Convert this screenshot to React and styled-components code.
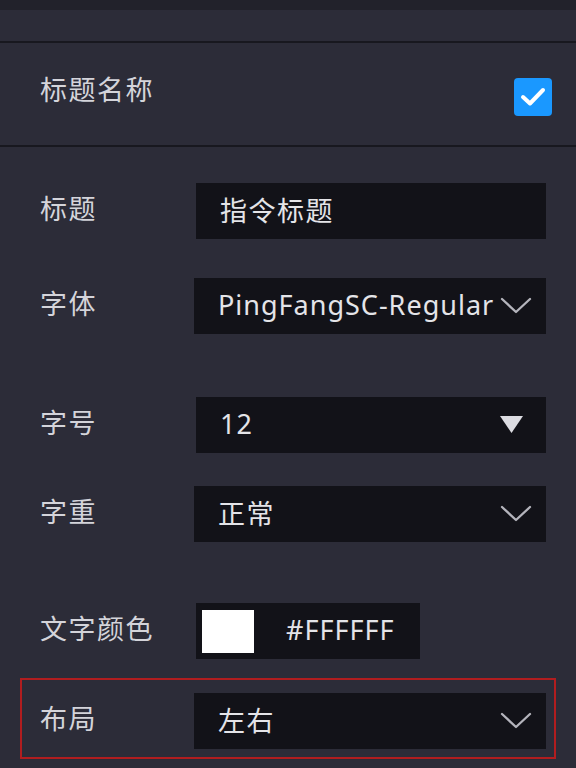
import React from "react";
import styled, { createGlobalStyle } from "styled-components";

const GlobalStyle = createGlobalStyle`
  html, body {
    margin: 0;
    padding: 0;
    background: #2c2c38;
  }
  * {
    box-sizing: border-box;
  }
`;

const Panel = styled.div`
  width: 576px;
  height: 768px;
  overflow: hidden;
  background: #2c2c38;
  font-family: "Noto Sans", "Noto Sans CJK SC", sans-serif;
  color: #d4d4da;
`;

const TopBar = styled.div`
  height: 10px;
  background: #22222b;
`;

const Spacer = styled.div`
  height: 31px;
`;

const Divider = styled.div`
  height: 2px;
  background: #18181f;
`;

const Header = styled.div`
  display: flex;
  align-items: center;
  justify-content: space-between;
  height: 102px;
  padding: 0 24px 0 40px;
`;

const HeaderTitle = styled.div`
  font-size: 27px;
  letter-spacing: 1.5px;
  margin-bottom: 11px;
`;

const CheckBox = styled.div`
  width: 38px;
  height: 38px;
  border-radius: 4px;
  background: #1a98ff;
  margin-top: 6px;
  display: flex;
  align-items: center;
  justify-content: center;
`;

const Form = styled.div`
  display: flex;
  flex-direction: column;
`;

const Row = styled.div`
  display: flex;
  align-items: center;
  margin-top: ${p => p.$top}px;
  padding: 0 30px 0 40px;
`;

const HighlightRow = styled(Row)`
  margin-left: 20px;
  margin-right: 20px;
  border: 2px solid #b11d1f;
  padding: 13px 8px 8px 18px;
`;

const Label = styled.div`
  width: ${p => p.$width || 155}px;
  flex-shrink: 0;
  font-size: 27px;
  letter-spacing: 1.5px;
  margin-top: -8px;
`;

const Field = styled.div`
  display: flex;
  align-items: center;
  justify-content: space-between;
  width: ${p => p.$width || 352}px;
  height: 56px;
  background: #121218;
  padding: 0 ${p => p.$right || 14}px 0 24px;
  font-size: 27px;
  color: #e4e4e8;
  white-space: nowrap;
  overflow: hidden;
`;

const FieldText = styled.span`
  letter-spacing: ${p => (p.$cjk ? "1.5px" : "1px")};
  margin-top: -3px;
`;

const ColorField = styled.div`
  display: flex;
  align-items: center;
  width: 224px;
  height: 56px;
  background: #121218;
  padding-left: 6px;
  font-size: 27px;
  color: #e4e4e8;
`;

const Swatch = styled.div`
  width: 52px;
  height: 43px;
  background: ${p => p.$color};
  margin-right: 32px;
`;

const Chevron = () => (
  <svg width="32" height="18" viewBox="0 0 32 18">
    <polyline
      points="2,2 16,15 30,2"
      fill="none"
      stroke="#b4b4bc"
      strokeWidth="2.3"
      strokeLinecap="round"
      strokeLinejoin="round"
    />
  </svg>
);

const Triangle = () => (
  <svg width="23" height="18" viewBox="0 0 23 18">
    <polygon points="0,0 23,0 11.5,17" fill="#dcdce2" />
  </svg>
);

export default function App() {
  return (
    <Panel>
      <GlobalStyle />
      <TopBar />
      <Spacer />
      <Divider />
      <Header>
        <HeaderTitle>标题名称</HeaderTitle>
        <CheckBox>
          <svg width="38" height="38" viewBox="0 0 38 38">
            <polyline
              points="9,19 16,25.5 29,12"
              fill="none"
              stroke="#ffffff"
              strokeWidth="4"
              strokeLinecap="round"
              strokeLinejoin="round"
            />
          </svg>
        </CheckBox>
      </Header>
      <Divider />
      <Form>
        <Row $top={36}>
          <Label $width={156}>标题</Label>
          <Field>
            <FieldText $cjk>指令标题</FieldText>
          </Field>
        </Row>
        <Row $top={39}>
          <Label $width={154}>字体</Label>
          <Field $right={14}>
            <FieldText>PingFangSC-Regular</FieldText>
            <Chevron />
          </Field>
        </Row>
        <Row $top={63}>
          <Label $width={156}>字号</Label>
          <Field $width={350} $right={23}>
            <FieldText>12</FieldText>
            <Triangle />
          </Field>
        </Row>
        <Row $top={33}>
          <Label $width={154}>字重</Label>
          <Field>
            <FieldText $cjk>正常</FieldText>
            <Chevron />
          </Field>
        </Row>
        <Row $top={61}>
          <Label $width={156}>文字颜色</Label>
          <ColorField>
            <Swatch $color="#ffffff" />
            <FieldText>#FFFFFF</FieldText>
          </ColorField>
        </Row>
        <HighlightRow $top={19}>
          <Label $width={154}>布局</Label>
          <Field>
            <FieldText $cjk>左右</FieldText>
            <Chevron />
          </Field>
        </HighlightRow>
      </Form>
    </Panel>
  );
}
